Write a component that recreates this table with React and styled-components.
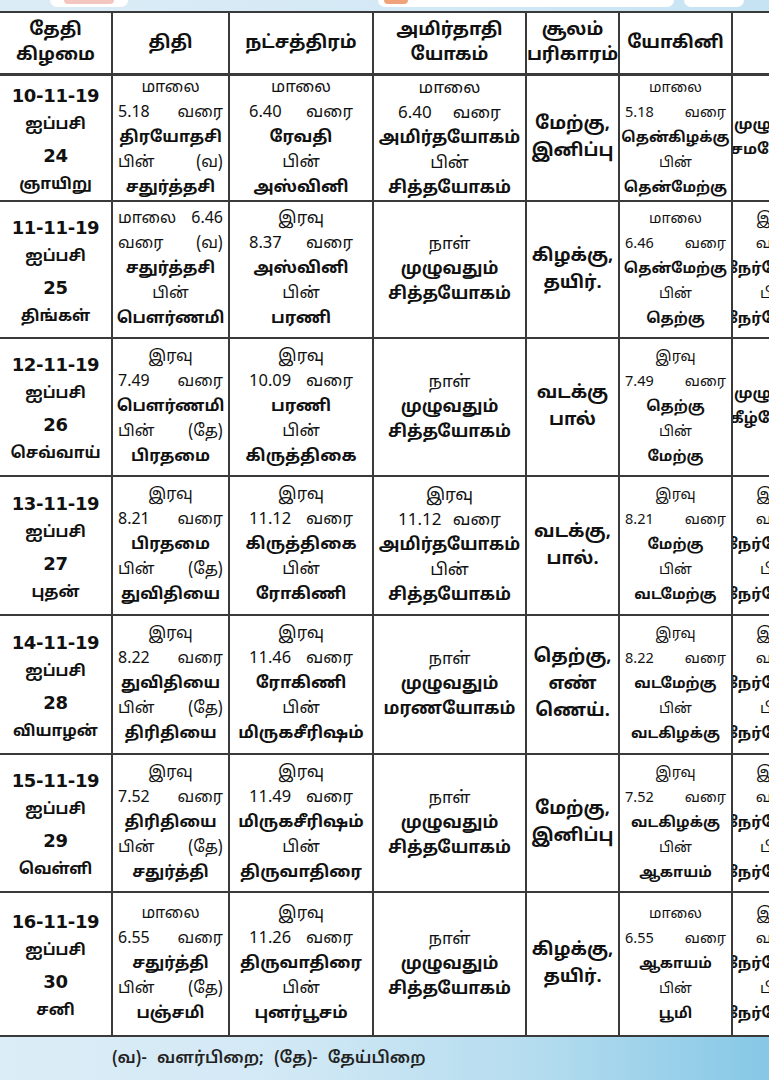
import React from "react";
import styled, { createGlobalStyle } from "styled-components";

const GlobalStyle = createGlobalStyle`
  html, body {
    margin: 0;
    padding: 0;
    background: #ffffff;
  }
  body {
    overflow: hidden;
  }
`;

const TAMIL = `"Noto Sans Tamil", "Noto Serif Tamil", "Lohit Tamil", "Latha", "Noto Sans", "DejaVu Sans", sans-serif`;

const Page = styled.div`
  width: 769px;
  height: 1080px;
  overflow: hidden;
  display: flex;
  flex-direction: column;
  font-family: ${TAMIL};
  color: #111;
`;

const TopStrip = styled.div`
  height: 11px;
  flex-shrink: 0;
  display: flex;
  align-items: flex-start;
  padding-left: 50px;
  background: linear-gradient(90deg, #dcecf6 0%, #d2e8f5 60%, #c6e3f3 100%);
  border-bottom: 2px solid #3a3a3a;
`;

const Tab = styled.div`
  width: ${(p) => p.$w}px;
  margin-left: ${(p) => p.$gap}px;
  height: 7px;
  background: #ffffff;
  border-radius: 0 0 10px 10px;
  display: flex;
  padding-left: ${(p) => p.$dotAt || 0}px;
  box-sizing: border-box;

  &::before {
    content: "";
    display: ${(p) => (p.$dot ? "block" : "none")};
    width: ${(p) => p.$dotW || 40}px;
    height: 4px;
    background: ${(p) => p.$dot};
    border-radius: 0 0 6px 6px;
  }
`;

const Grid = styled.div`
  display: grid;
  grid-template-columns: 113px 117px 144px 153px 93px 113px 90px;
  grid-template-rows: 63px 126px 137px 138px 139px 139px 138px 144px;
  flex-shrink: 0;
  background: #ffffff;
`;

const Cell = styled.div`
  box-sizing: border-box;
  border-right: 2px solid #3a3a3a;
  border-bottom: ${(p) => (p.$head ? "3px" : "2px")} solid #3a3a3a;
  display: flex;
  flex-direction: column;
  justify-content: center;
  align-items: center;
  text-align: center;
  padding: ${(p) => (p.$top ? `${p.$top}px` : "0")} ${(p) => p.$pad ?? 4}px 0;
  overflow: hidden;
  white-space: nowrap;
`;

const HeadText = styled.div`
  font-size: 18px;
  font-weight: 700;
  line-height: 25px;
  color: #111;
`;

const DateLine = styled.div`
  font-family: ${(p) => (p.$num ? `"DejaVu Sans", sans-serif` : TAMIL)};
  font-size: ${(p) => (p.$num ? 18 : 15.5)}px;
  font-weight: 700;
  line-height: 30px;
  color: #111;
  letter-spacing: ${(p) => (p.$num ? "-0.3px" : "0")};
`;

const Line = styled.div`
  font-size: ${(p) => p.$size}px;
  font-weight: ${(p) => (p.$light ? 400 : 700)};
  line-height: ${(p) => p.$lh}px;
  color: #111;
  align-self: ${(p) => (p.$spread ? "stretch" : "center")};
  display: ${(p) => (p.$spread ? "flex" : "block")};
  justify-content: space-between;
`;

const Footer = styled.div`
  flex: 1;
  display: flex;
  align-items: center;
  padding-left: 112px;
  font-size: 16.5px;
  font-weight: 600;
  color: #222;
  word-spacing: 6px;
  background: linear-gradient(90deg, #dbedf7 0%, #d3e9f5 35%, #b4dcef 70%, #86c8e6 100%);
`;

const headers = [
  ["தேதி", "கிழமை"],
  ["திதி"],
  ["நட்சத்திரம்"],
  ["அமிர்தாதி", "யோகம்"],
  ["சூலம்", "பரிகாரம்"],
  ["யோகினி"],
  [""],
];

// one entry per text column: font size, line height, side padding
const columns = [
  { key: "thithi", size: 16, lh: 25, pad: 5 },
  { key: "star", size: 16.5, lh: 25, pad: 19 },
  { key: "yogam", size: 17, lh: 25, pad: 24 },
  { key: "soolam", size: 18, lh: 27, pad: 4 },
  { key: "yogini", size: 14.5, lh: 25, pad: 5 },
  { key: "nokku", size: 15, lh: 25, pad: 0, center: true },
];

const days = [
  {
    date: ["10-11-19", "ஐப்பசி", "24", "ஞாயிறு"],
    thithi: ["மாலை", "5.18 வரை", "திரயோதசி", "பின் (வ)", "சதுர்த்தசி"],
    star: ["மாலை", "6.40 வரை", "ரேவதி", "பின்", "அஸ்வினி"],
    yogam: ["மாலை", "6.40 வரை", "அமிர்தயோகம்", "பின்", "சித்தயோகம்"],
    soolam: ["மேற்கு,", "இனிப்பு"],
    yogini: ["மாலை", "5.18 வரை", "தென்கிழக்கு", "பின்", "தென்மேற்கு"],
    nokku: ["முழுவதும்", "சமநோக்கு"],
  },
  {
    date: ["11-11-19", "ஐப்பசி", "25", "திங்கள்"],
    thithi: ["மாலை 6.46", "வரை (வ)", "சதுர்த்தசி", "பின்", "பௌர்ணமி"],
    star: ["இரவு", "8.37 வரை", "அஸ்வினி", "பின்", "பரணி"],
    yogam: ["நாள்", "முழுவதும்", "சித்தயோகம்"],
    soolam: ["கிழக்கு,", "தயிர்."],
    yogini: ["மாலை", "6.46 வரை", "தென்மேற்கு", "பின்", "தெற்கு"],
    nokku: ["இரவு", "வரை", "நேர்நோக்கு", "பின்", "நேர்நோக்கு"],
  },
  {
    date: ["12-11-19", "ஐப்பசி", "26", "செவ்வாய்"],
    thithi: ["இரவு", "7.49 வரை", "பௌர்ணமி", "பின் (தே)", "பிரதமை"],
    star: ["இரவு", "10.09 வரை", "பரணி", "பின்", "கிருத்திகை"],
    yogam: ["நாள்", "முழுவதும்", "சித்தயோகம்"],
    soolam: ["வடக்கு", "பால்"],
    yogini: ["இரவு", "7.49 வரை", "தெற்கு", "பின்", "மேற்கு"],
    nokku: ["முழுவதும்", "கீழ்நோக்கு"],
  },
  {
    date: ["13-11-19", "ஐப்பசி", "27", "புதன்"],
    thithi: ["இரவு", "8.21 வரை", "பிரதமை", "பின் (தே)", "துவிதியை"],
    star: ["இரவு", "11.12 வரை", "கிருத்திகை", "பின்", "ரோகிணி"],
    yogam: ["இரவு", "11.12 வரை", "அமிர்தயோகம்", "பின்", "சித்தயோகம்"],
    soolam: ["வடக்கு,", "பால்."],
    yogini: ["இரவு", "8.21 வரை", "மேற்கு", "பின்", "வடமேற்கு"],
    nokku: ["இரவு", "வரை", "நேர்நோக்கு", "பின்", "நேர்நோக்கு"],
  },
  {
    date: ["14-11-19", "ஐப்பசி", "28", "வியாழன்"],
    thithi: ["இரவு", "8.22 வரை", "துவிதியை", "பின் (தே)", "திரிதியை"],
    star: ["இரவு", "11.46 வரை", "ரோகிணி", "பின்", "மிருகசீரிஷம்"],
    yogam: ["நாள்", "முழுவதும்", "மரணயோகம்"],
    soolam: ["தெற்கு,", "எண்", "ணெய்."],
    yogini: ["இரவு", "8.22 வரை", "வடமேற்கு", "பின்", "வடகிழக்கு"],
    nokku: ["இரவு", "வரை", "நேர்நோக்கு", "பின்", "நேர்நோக்கு"],
  },
  {
    date: ["15-11-19", "ஐப்பசி", "29", "வெள்ளி"],
    thithi: ["இரவு", "7.52 வரை", "திரிதியை", "பின் (தே)", "சதுர்த்தி"],
    star: ["இரவு", "11.49 வரை", "மிருகசீரிஷம்", "பின்", "திருவாதிரை"],
    yogam: ["நாள்", "முழுவதும்", "சித்தயோகம்"],
    soolam: ["மேற்கு,", "இனிப்பு"],
    yogini: ["இரவு", "7.52 வரை", "வடகிழக்கு", "பின்", "ஆகாயம்"],
    nokku: ["இரவு", "வரை", "நேர்நோக்கு", "பின்", "நேர்நோக்கு"],
  },
  {
    date: ["16-11-19", "ஐப்பசி", "30", "சனி"],
    thithi: ["மாலை", "6.55 வரை", "சதுர்த்தி", "பின் (தே)", "பஞ்சமி"],
    star: ["இரவு", "11.26 வரை", "திருவாதிரை", "பின்", "புனர்பூசம்"],
    yogam: ["நாள்", "முழுவதும்", "சித்தயோகம்"],
    soolam: ["கிழக்கு,", "தயிர்."],
    yogini: ["மாலை", "6.55 வரை", "ஆகாயம்", "பின்", "பூமி"],
    nokku: ["இரவு", "வரை", "நேர்நோக்கு", "பின்", "நேர்நோக்கு"],
  },
];

// the short "time" words look lighter in print
const isLight = (t) => /^(மாலை|இரவு|பின்|நாள்|வரை|\d)/.test(t);

const TextCell = ({ lines, col }) => (
  <Cell $pad={col.pad}>
    {lines.map((t, i) => {
      const words = t.split(" ");
      const spread = !col.center && words.length > 1;
      return (
        <Line key={i} $size={col.size} $lh={col.lh} $spread={spread} $light={isLight(t)}>
          {spread ? words.map((w, j) => <span key={j}>{w}</span>) : t}
        </Line>
      );
    })}
  </Cell>
);

const App = () => {
  return (
    <>
      <GlobalStyle />
      <Page>
        <TopStrip>
          <Tab $w={78} $gap={0} $dot="#f3c6c0" $dotW={50} $dotAt={14} />
          <Tab $w={296} $gap={250} $dot="#f0a37a" $dotW={24} $dotAt={6} />
          <Tab $w={60} $gap={10} />
        </TopStrip>
        <Grid>
          {headers.map((h, i) => (
            <Cell key={"h" + i} $head>
              {h.map((t, j) => (
                <HeadText key={j}>{t}</HeadText>
              ))}
            </Cell>
          ))}
          {days.map((d) => (
            <React.Fragment key={d.date[0]}>
              <Cell $top={6}>
                {d.date.map((t, j) => (
                  <DateLine key={j} $num={j === 0 || j === 2}>
                    {t}
                  </DateLine>
                ))}
              </Cell>
              {columns.map((c) => (
                <TextCell key={c.key} lines={d[c.key]} col={c} />
              ))}
            </React.Fragment>
          ))}
        </Grid>
        <Footer>(வ)- வளர்பிறை; (தே)- தேய்பிறை</Footer>
      </Page>
    </>
  );
};

export default App;
